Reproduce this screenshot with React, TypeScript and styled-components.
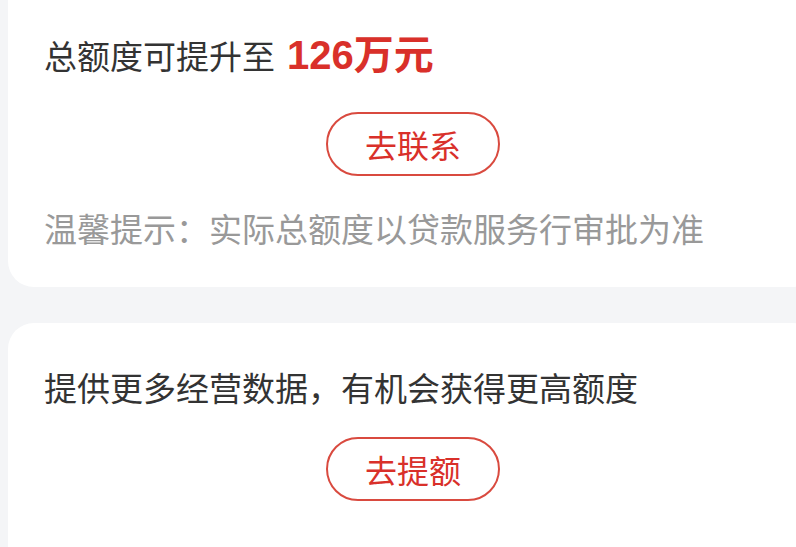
import React, { FC } from "react";
import styled, { createGlobalStyle } from "styled-components";

const GlobalStyle = createGlobalStyle`
  html, body {
    margin: 0;
    padding: 0;
    background: #f4f5f7;
    overflow: hidden;
  }
  body {
    font-family: "Noto Sans CJK SC", "Noto Sans", sans-serif;
  }
`;

const Page = styled.div`
  width: 796px;
  height: 547px;
  overflow: hidden;
  background: #f4f5f7;
  display: flex;
  flex-direction: column;
  gap: 36px;
`;

type CardProps = {
  $cutTop?: boolean;
};

// the screenshot is a slice of a longer page: first card starts above it,
// second one runs past the bottom
const Card = styled.section<CardProps>`
  width: 810px;
  margin-left: 8px;
  margin-top: ${({ $cutTop }) => ($cutTop ? "-40px" : "0")};
  padding: ${({ $cutTop }) => ($cutTop ? "72px 36px 36px" : "41px 36px 90px")};
  box-sizing: border-box;
  background: #ffffff;
  border-radius: 26px;
  display: flex;
  flex-direction: column;
  flex-shrink: 0;
`;

const Title = styled.div`
  font-size: 33px;
  line-height: 46px;
  color: #333333;
  display: flex;
  align-items: baseline;
  white-space: nowrap;
`;

const Amount = styled.span`
  margin-left: 12px;
  font-size: 40px;
  font-weight: 700;
  color: #d9302a;
  font-family: "Liberation Sans", "Noto Sans CJK SC", sans-serif;
`;

const ButtonRow = styled.div<{ $gap: number }>`
  display: flex;
  justify-content: center;
  margin-top: ${({ $gap }) => $gap}px;
`;

const OutlineButton = styled.button`
  width: 174px;
  height: 64px;
  border: 2px solid #d94a3f;
  border-radius: 32px;
  background: #ffffff;
  color: #d9302a;
  font-family: "Noto Sans CJK SC", sans-serif;
  font-size: 32px;
  padding: 0;
  display: flex;
  align-items: center;
  justify-content: center;
  cursor: pointer;
`;

const Tip = styled.div`
  margin-top: 29px;
  font-size: 33px;
  line-height: 46px;
  color: #999999;
  white-space: nowrap;
`;

const App: FC = () => {
  return (
    <>
      <GlobalStyle />
      <Page>
        <Card $cutTop>
          <Title>
            总额度可提升至
            <Amount>126万元</Amount>
          </Title>
          <ButtonRow $gap={34}>
            <OutlineButton>去联系</OutlineButton>
          </ButtonRow>
          <Tip>温馨提示：实际总额度以贷款服务行审批为准</Tip>
        </Card>
        <Card>
          <Title>提供更多经营数据，有机会获得更高额度</Title>
          <ButtonRow $gap={27}>
            <OutlineButton>去提额</OutlineButton>
          </ButtonRow>
        </Card>
      </Page>
    </>
  );
};

export default App;
